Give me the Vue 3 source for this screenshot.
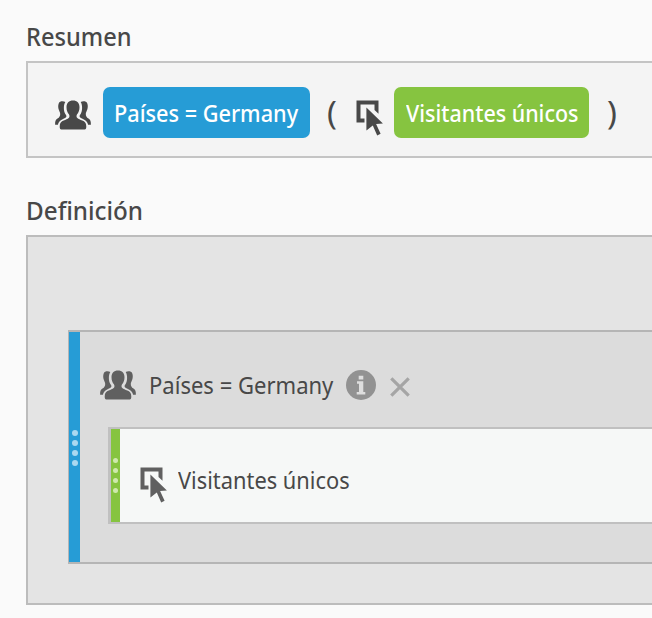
<script setup>
import { h } from 'vue'

const dots = [0, 1, 2, 3]

const PeopleIcon = () =>
  h('svg', { viewBox: '0 0 36 30', width: 36, height: 30, fill: 'currentColor' }, [
    h('path', { d: 'M18 .4c4.100 0 6.500 2.400 6.500 6.800 0 3.200-1 5.300-2.400 7.100-.8 1-.8 2.900.2 3.800 1.200 1 3 1.700 5 2.500 2.500 1 3.900 2.300 4 5.800 0 2.100-.4 3-1.600 3H6.300c-1.200 0-1.600-.9-1.600-3 .1-3.500 1.500-4.800 4-5.800 2-.8 3.800-1.500 5-2.500 1-.9 1-2.800.2-3.800-1.400-1.800-2.400-3.900-2.400-7.100C11.500 2.800 13.900.4 18 .4z' }),
    h('path', { d: 'M10.300 2.100C8.600 1 4.800.8 3.700 3.400c-.7 1.700-.6 4 .1 6.400.5 1.600 1.400 2.700 1.400 4.100 0 2.100-.8 3.300-2.700 4.700C.5 20 .1 21.200.1 24.700h2.800c.5-2.500 2.100-4.300 4.700-5.400 1.900-.8 3.600-1.400 3.800-2.700.2-1.200-.5-1.800-1.200-2.900C8.600 11.200 8.300 5.200 10.300 2.100z' }),
    h('path', { d: 'M25.700 2.100c1.700-1.100 5.500-1.300 6.600 1.300.7 1.700.6 4-.1 6.400-.5 1.600-1.400 2.700-1.400 4.100 0 2.100.8 3.300 2.700 4.700 2 1.400 2.400 2.600 2.400 6.100h-2.800c-.5-2.500-2.100-4.300-4.700-5.400-1.900-.8-3.600-1.400-3.800-2.700-.2-1.200.5-1.800 1.200-2.900 1.600-2.500 1.900-8.500-.1-11.600z' }),
  ])

const PointerIcon = () =>
  h('svg', { viewBox: '0 0 28 36', width: 28, height: 36, fill: 'currentColor' }, [
    h('path', { d: 'M.5.500h22v13.300l-4-3.800v-5.500h-14v14h4v4H.5z' }),
    h('path', { d: 'M10.400 7.600L26.900 23.400l-6.800.7 4.500 9.700-3.400 1.600-4.400-9.800-6.400 5z' }),
  ])
</script>

<template>
  <main class="page">
    <h2 class="heading"><span class="t resumen">Resumen</span></h2>
    <section class="panel summary">
      <PeopleIcon class="people" />
      <span class="chip blue"><span class="t chip-country">Países = Germany</span></span>
      <span class="paren open">(</span>
      <PointerIcon class="pointer" />
      <span class="chip green"><span class="t chip-visitors">Visitantes únicos</span></span>
      <span class="paren close">)</span>
    </section>

    <h2 class="heading second"><span class="t definicion">Definición</span></h2>
    <section class="panel definition">
      <div class="container">
        <div class="handle blue"><i v-for="d in dots" :key="d" /></div>
        <div class="content">
          <div class="title">
            <PeopleIcon class="people" />
            <span class="t country">Países = Germany</span>
            <svg class="info" viewBox="0 0 30 30">
              <circle cx="15" cy="15" r="15" fill="#929292" />
              <path d="M12.700 5.800h4.600v3.600h-4.600zM11 11.200h6.300v10.800h2v2.500h-8.600v-2.500h2.300v-8.300H11z" fill="#dedede" />
            </svg>
            <svg class="remove" viewBox="0 0 20 20"><path d="M1.300 1.300l17.400 17.400M18.700 1.300L1.300 18.700" /></svg>
          </div>
          <div class="metric">
            <div class="handle green"><i v-for="d in dots" :key="d" /></div>
            <PointerIcon class="pointer" />
            <span class="t visitors">Visitantes únicos</span>
          </div>
        </div>
      </div>
    </section>
  </main>
</template>

<style>
body { margin: 0; background: #fafafa; overflow: hidden; }
</style>

<style scoped>
* { box-sizing: border-box; }
svg { display: block; flex: none; }
.page {
  height: 618px;
  padding: 20px 0 0 26px;
  overflow: hidden;
  background: #fafafa;
  color: #484848;
  font: 400 23px/32px "Noto Sans", "Open Sans", sans-serif;
}
.t { display: block; flex: none; white-space: nowrap; transform-origin: 0 50%; }
.heading { height: 32px; margin: 0 0 9px; font-size: 25px; font-weight: 500; line-height: 32px; }
.second { margin-top: 36px; }
.panel { border: 2px solid #c4c4c4; border-right: 0; }
.summary { display: flex; height: 97px; padding: 24px 0 0 27px; background: #f4f4f4; }
.summary .people { margin-top: 13px; }
.chip { display: block; flex: none; height: 51px; padding: 10px 0 0 11px; border-radius: 7px; color: #fff; font-weight: 500; }
.chip.blue { width: 207px; margin-left: 12px; }
.chip.green { width: 195px; margin-left: 10px; padding-left: 12px; }
.blue { background: #269cd6; }
.green { background: #86c440; }
.paren { flex: none; width: 9px; height: 40px; margin-top: 6px; font-size: 33px; line-height: 40px; text-indent: -1px; }
.open { margin-left: 18px; }
.close { margin-left: 19px; }
.summary .pointer { margin: 13px 0 0 19px; }
.definition { height: 370px; padding: 93px 0 0 40px; background: #e4e4e4; border-color: #bcbcbc; }
.container { display: flex; height: 234px; border: 2px solid #b5b5b5; border-width: 2px 0 2px 1px; background: #dcdcdc; }
.handle { display: flex; flex: none; flex-direction: column; align-items: center; justify-content: center; gap: 4px; width: 11px; }
.handle i { width: 6px; height: 6px; border-radius: 50%; background: #a9d8f0; }
.handle.blue { padding-top: 2px; }
.handle.green { width: 9px; margin-right: 20px; }
.handle.green i { width: 5px; height: 5px; margin-bottom: 1px; background: #cfe9ad; }
.content { flex: 1; padding: 35px 0 0 28px; }
.title { display: flex; height: 60px; margin-left: -8px; color: #606060; }
.title .people { margin-top: 3px; }
.title .t { width: 185px; margin: 2px 0 0 13px; }
.info { width: 30px; height: 30px; margin: 3px 0 0 12px; }
.remove { width: 20px; height: 20px; margin: 10px 0 0 14px; fill: none; stroke: #a5a5a5; stroke-width: 3.200; }
.metric { display: flex; height: 97px; border: 2px solid #c0c0c0; border-width: 2px 0 2px 3px; background: #f6f8f7; color: #606060; }
.metric .pointer { margin-top: 38px; }
.metric .t { margin: 35px 0 0 10px; }
.country, .visitors { color: #484848; }
.resumen { transform: scaleX(.945); }
.definicion { transform: scaleX(.97); }
.chip-country { transform: scaleX(.943); }
.chip-visitors { transform: scaleX(.933); }
.country { transform: scaleX(.958); }
.visitors { transform: scaleX(.95); }
</style>
